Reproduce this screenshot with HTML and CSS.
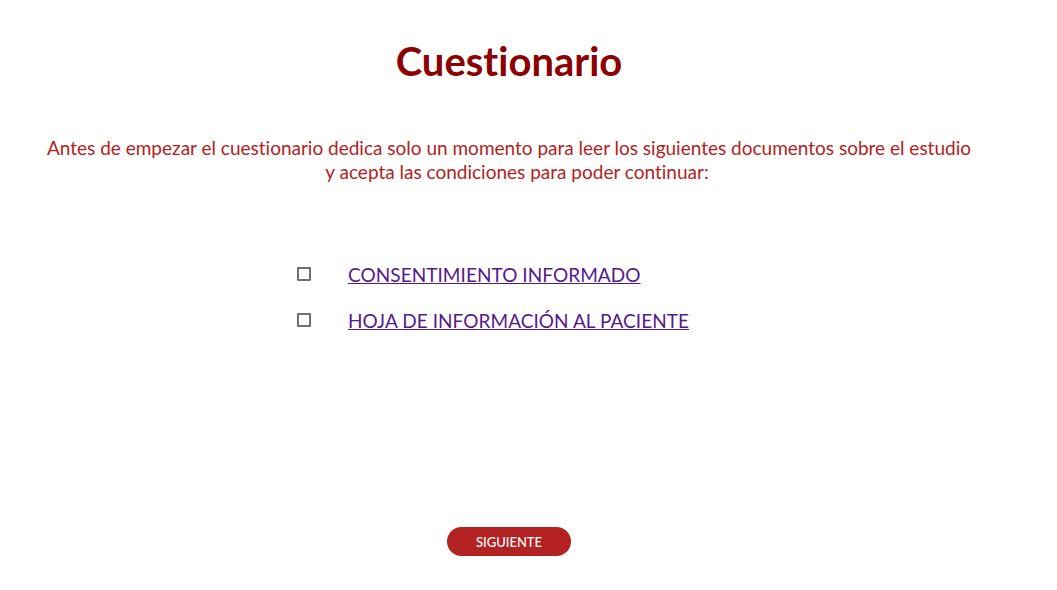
FILE: index.html
```html
<!DOCTYPE html>
<html lang="es">
<head>
<meta charset="utf-8">
<title>Cuestionario</title>
<link rel="stylesheet" href="styles.css">
</head>
<body>
<main class="page">
  <h1 class="title">Cuestionario</h1>
  <p class="intro">Antes de empezar el cuestionario dedica solo un momento para leer los siguientes documentos sobre el estudio<br><span class="second">y acepta las condiciones para poder continuar:</span></p>
  <ul class="docs">
    <li class="doc"><input type="checkbox" class="check"><a href="#" class="link">CONSENTIMIENTO INFORMADO</a></li>
    <li class="doc"><input type="checkbox" class="check"><a href="#" class="link">HOJA DE INFORMACIÓN AL PACIENTE</a></li>
  </ul>
  <div class="actions"><button class="next">SIGUIENTE</button></div>
</main>
</body>
</html>
```
FILE: styles.css
```css
html, body { margin: 0; padding: 0; background: #fff; }
body { font-family: Lato, "Noto Sans", sans-serif; font-variant-ligatures: none; }
.page { width: 1018px; display: flex; flex-direction: column; align-items: center; }
.title { margin: 35px 0 0; font-size: 40px; font-weight: 700; color: #8b0000; line-height: 52px; }
.intro { margin: 49px 0 0; font-size: 19px; line-height: 24px; color: #b22222; text-align: center; }
.second { display: inline-block; margin-left: 16px; }
.docs { list-style: none; margin: 79px 0 0; padding: 0; align-self: flex-start; margin-left: 297px; display: flex; flex-direction: column; gap: 24px; }
.doc { display: flex; align-items: center; height: 22px; }
.check { appearance: none; -webkit-appearance: none; margin: 0 37px 0 0; width: 14px; height: 14px; border: 2px solid #707070; border-radius: 1px; background: #fff; box-sizing: border-box; }
.link { font-size: 19px; letter-spacing: 0.05px; color: #551a8b; text-decoration: underline; }
.actions { margin-top: 196px; }
.next { width: 124px; height: 29px; border: none; border-radius: 15px; background: #b22222; color: #fff; font-family: Lato, sans-serif; font-variant-ligatures: none; font-size: 13px; font-weight: 500; padding: 0; }
```
